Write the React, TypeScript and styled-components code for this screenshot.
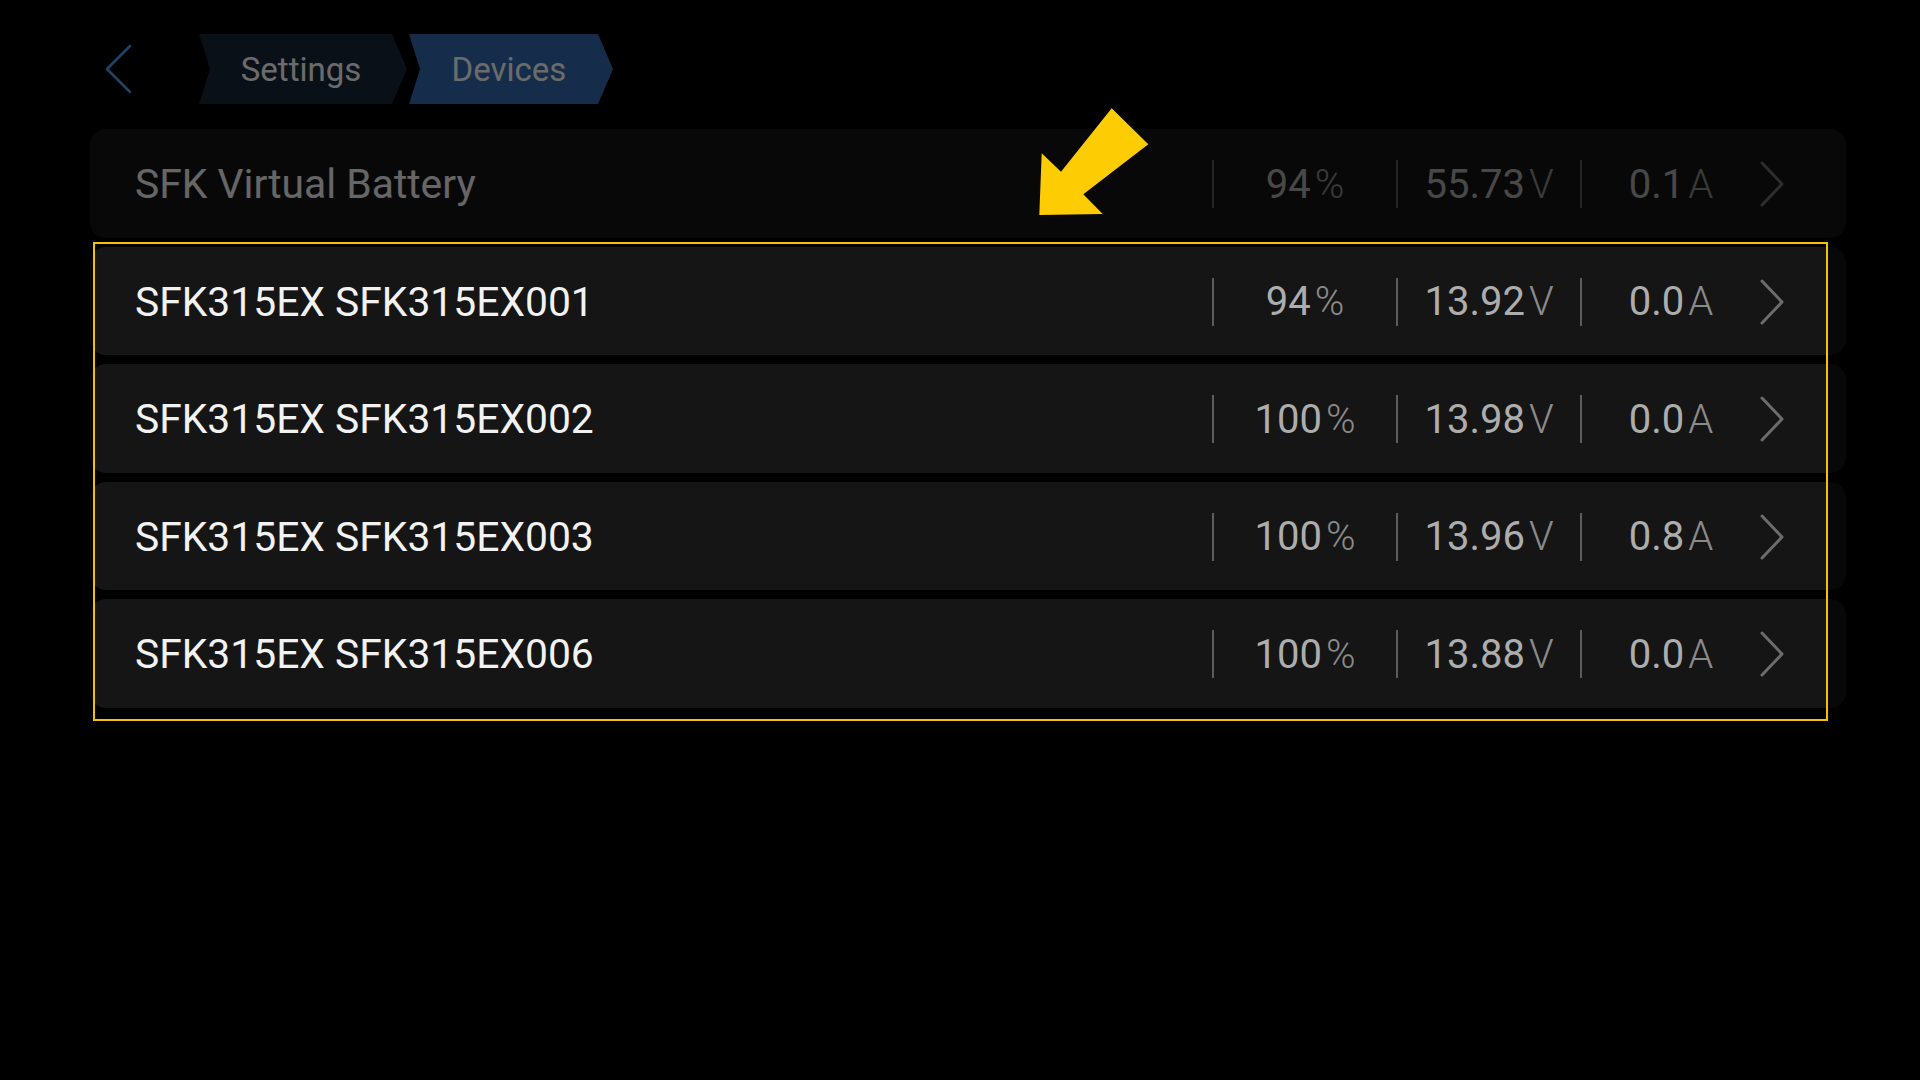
import styled, { createGlobalStyle } from 'styled-components';

type Device = {
  name: string;
  soc: string;
  volt: string;
  amp: string;
};

const virtualBattery: Device = { name: 'SFK Virtual Battery', soc: '94', volt: '55.73', amp: '0.1' };

const devices: Device[] = [
  { name: 'SFK315EX SFK315EX001', soc: '94', volt: '13.92', amp: '0.0' },
  { name: 'SFK315EX SFK315EX002', soc: '100', volt: '13.98', amp: '0.0' },
  { name: 'SFK315EX SFK315EX003', soc: '100', volt: '13.96', amp: '0.8' },
  { name: 'SFK315EX SFK315EX006', soc: '100', volt: '13.88', amp: '0.0' },
];

const DeviceRow = ({ device }: { device: Device }) => {
  return (
    <Row>
      <Name>{device.name}</Name>
      <Stats>
        <Stat>
          {device.soc}
          <Unit>%</Unit>
        </Stat>
        <Stat>
          {device.volt}
          <Unit>V</Unit>
        </Stat>
        <Stat>
          {device.amp}
          <Unit>A</Unit>
        </Stat>
        <Chevron viewBox="0 0 24 46">
          <polyline points="2,2 22,23 2,44" />
        </Chevron>
      </Stats>
    </Row>
  );
};

const App = () => {
  return (
    <Page>
      <GlobalStyle />
      <TopBar>
        <BackButton aria-label="back">
          <svg width="28" height="50" viewBox="0 0 28 50">
            <polyline points="26,2 3,25 26,48" fill="none" stroke="#45a2f5" strokeWidth="2.6" strokeLinecap="round" strokeLinejoin="round" />
          </svg>
        </BackButton>
        <Crumbs>
          <Crumb>Settings</Crumb>
          <Crumb $active>Devices</Crumb>
        </Crumbs>
      </TopBar>

      <List>
        <DeviceRow device={virtualBattery} />
        <Group>
          {devices.map(d => (
            <DeviceRow key={d.name} device={d} />
          ))}
          <Highlight />
        </Group>
      </List>

      {/* annotation arrow pointing at the highlighted group */}
      <Arrow width="116" height="114" viewBox="0 0 116 114">
        <polygon points="3.3,110 5.7,48.3 25,66.7 75.7,3.3 112.3,39.3 47.3,89.3 66.7,109" />
      </Arrow>
    </Page>
  );
};

const GlobalStyle = createGlobalStyle`
  html, body {
    margin: 0;
    padding: 0;
    background: #000;
  }
  body {
    font-family: Roboto, "Noto Sans", "Liberation Sans", sans-serif;
    overflow: hidden;
  }
`;

const Page = styled.div`
  position: relative;
  width: 1920px;
  height: 1080px;
  box-sizing: border-box;
  padding: 34px 74px 0 90px;
  background: #000;
  overflow: hidden;
`;

const TopBar = styled.div`
  display: flex;
  align-items: center;
  height: 70px;
`;

const BackButton = styled.button`
  display: flex;
  margin-left: 14px;
  padding: 0;
  width: 28px;
  height: 50px;
  background: none;
  border: none;
  cursor: pointer;
`;

const Crumbs = styled.div`
  display: flex;
  gap: 2px;
  margin-left: 67px;
`;

const Crumb = styled.div<{ $active?: boolean }>`
  display: flex;
  align-items: center;
  justify-content: center;
  box-sizing: border-box;
  width: ${p => (p.$active ? 204 : 208)}px;
  height: 70px;
  padding-right: 4px;
  font-size: 33px;
  color: #fff;
  background: ${p => (p.$active ? '#336bb0' : '#16263a')};
  clip-path: polygon(0 0, calc(100% - 15px) 0, 100% 50%, calc(100% - 15px) 100%, 0 100%, 11px 50%);
`;

const List = styled.div`
  display: flex;
  flex-direction: column;
  gap: 9px;
  margin-top: 25px;
`;

const Group = styled.div`
  position: relative;
  display: flex;
  flex-direction: column;
  gap: 9px;
`;

const Row = styled.div`
  display: flex;
  align-items: center;
  box-sizing: border-box;
  height: 108.5px;
  padding: 2px 62px 0 45px;
  border-radius: 16px;
  background: #151515;
`;

const Name = styled.div`
  flex: 1;
  font-size: 40.8px;
  color: #f2f2f2;
  white-space: nowrap;
`;

const Stats = styled.div`
  display: grid;
  grid-template-columns: 184px 184px 180px 24px;
  align-items: center;
`;

const Stat = styled.div`
  display: flex;
  align-items: center;
  justify-content: center;
  height: 48px;
  border-left: 2px solid #5c5c5c;
  font-size: 40px;
  color: #adadad;
`;

const Unit = styled.span`
  margin-left: 4px;
  font-weight: 300;
  color: #8a8a8a;
`;

const Chevron = styled.svg`
  width: 24px;
  height: 46px;
  fill: none;
  stroke: #6c6c6c;
  stroke-width: 3;
  stroke-linecap: round;
  stroke-linejoin: round;
`;

const Highlight = styled.div`
  position: absolute;
  top: -5px;
  left: 3px;
  right: 18px;
  bottom: -13px;
  border: 2px solid #f2c200;
  box-shadow: 0 0 0 3000px rgba(0, 0, 0, 0.58);
  pointer-events: none;
  z-index: 1;
`;

const Arrow = styled.svg`
  position: absolute;
  left: 1036px;
  top: 105px;
  fill: #fecc02;
  z-index: 2;
`;

export default App;
